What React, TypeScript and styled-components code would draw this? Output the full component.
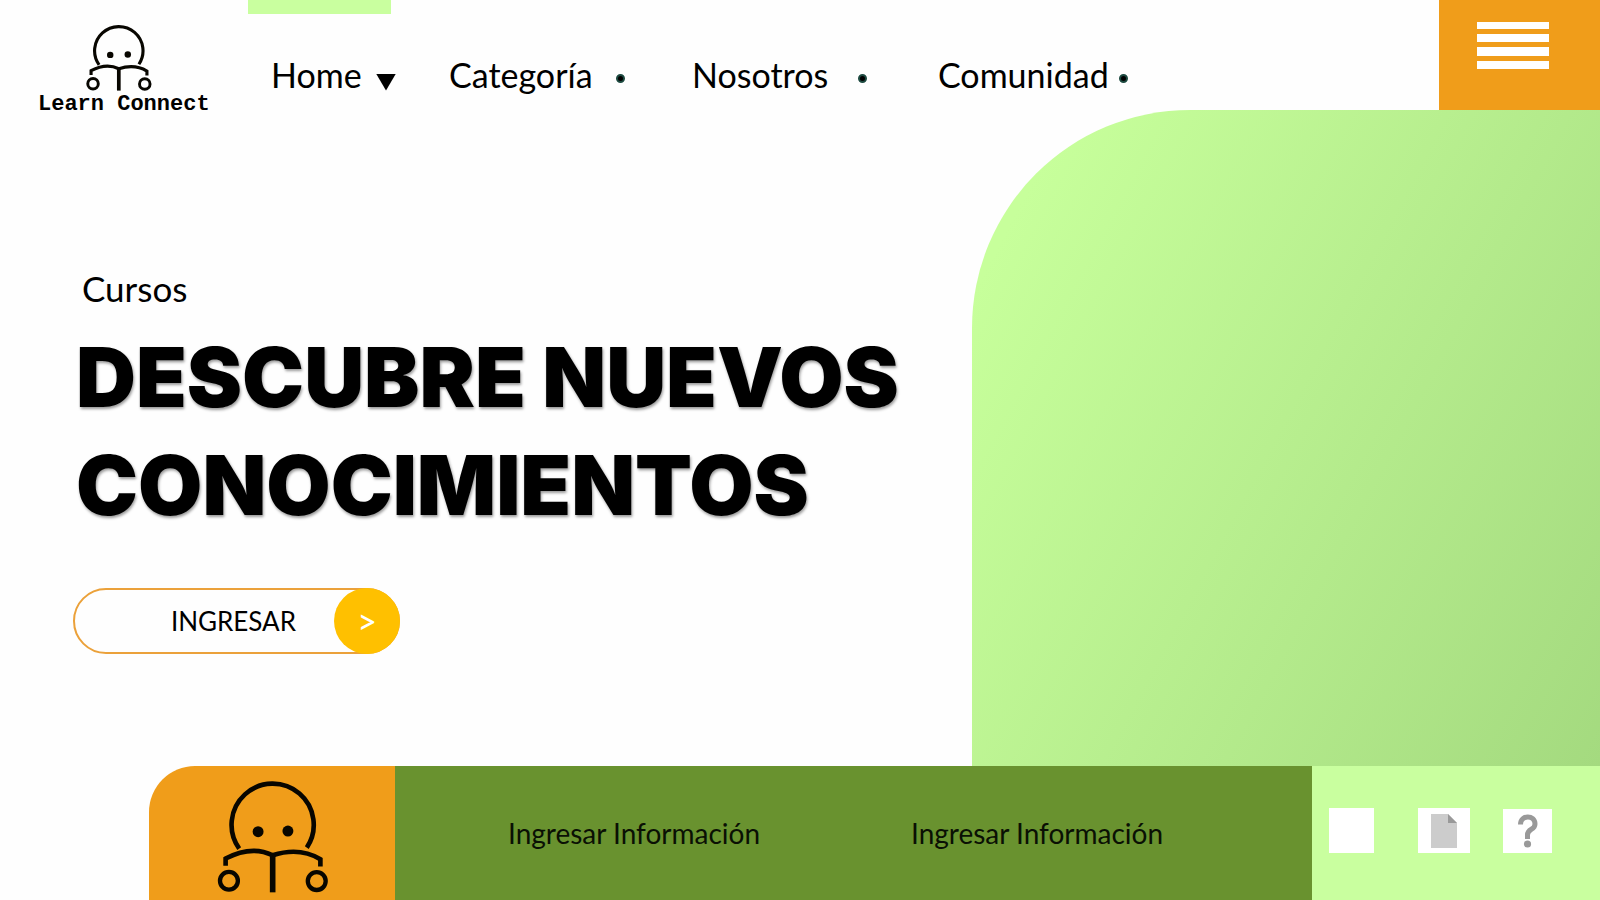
import React from "react";
import styled, { createGlobalStyle } from "styled-components";

const GlobalStyle = createGlobalStyle`
  * { box-sizing: border-box; }
  body { margin: 0; background: #fefefe; color: #000; font-family: Lato, "Open Sans", sans-serif; }
  button { padding: 0; border: 0; font: inherit; color: inherit; cursor: pointer; }
  a { color: inherit; text-decoration: none; }
  svg { display: block; flex: none; }
`;

const Page = styled.div`
  display: flex;
  flex-direction: column;
  min-height: 100vh;
`;

const Header = styled.header`
  display: flex;
  height: 110px;
`;

const Brand = styled.a`
  width: 248px;
  padding: 25px 0 0 38px;
`;

const BrandMark = styled.div`
  width: 66px;
  margin-left: 48px;
`;

const BrandName = styled.div`
  margin-top: 6px;
  font: 700 22px/16px "Courier New", "Liberation Mono", monospace;
  white-space: nowrap;
`;

const Nav = styled.nav`
  flex: 1;
  display: grid;
  grid-template-columns: 178px 243px 246px auto;
  justify-content: start;
`;

const NavItem = styled.a<{ $active?: boolean }>`
  &::before {
    content: "";
    display: block;
    width: 143px;
    height: 14px;
    margin-bottom: 41px;
    background: ${(p) => (p.$active ? "#c9ff9f" : "transparent")};
  }
`;

const NavLabel = styled.span`
  display: flex;
  align-items: center;
  padding-left: 23px;
  font-size: 34px;
  line-height: 40px;
`;

const NavText = styled.span<{ $width: number }>`
  width: ${(p) => p.$width}px;
`;

const Caret = styled.span`
  width: 20px;
  height: 17px;
  margin-top: 14px;
  background: #000;
  clip-path: polygon(0 0, 100% 0, 50% 100%);
`;

const Dot = styled.span`
  width: 9px;
  height: 9px;
  margin-top: 6px;
  border: 2px solid #1d4a40;
  border-radius: 50%;
  background: #000;
`;

const MenuButton = styled.button`
  display: flex;
  width: 161px;
  padding: 21px 0 0 38px;
  background: #f09d1a;
`;

const Main = styled.main`
  flex: 1;
  display: grid;
  grid-template-columns: 972fr 628fr;
`;

const Intro = styled.section`
  padding: 156px 0 56px 73px;
`;

const Kicker = styled.p`
  margin: 0 0 13px 9px;
  font-size: 35px;
  line-height: 44px;
`;

const Title = styled.h1`
  margin: 0 0 49px 3px;
  font: 900 83px/108px Inter, sans-serif;
  text-shadow: 1px 2px 3px rgba(0, 0, 0, 0.4);
`;

const EnterButton = styled.button`
  display: flex;
  align-items: center;
  justify-content: flex-end;
  width: 327px;
  height: 66px;
  border: 2px solid #eba13a;
  border-radius: 33px;
  background: transparent;
`;

const EnterText = styled.span`
  margin-right: 38px;
  font-size: 26px;
  line-height: 32px;
`;

const EnterArrow = styled.span`
  display: grid;
  place-items: center;
  width: 66px;
  height: 66px;
  margin-right: -2px;
  border-radius: 50%;
  background: #ffc000;
  color: #fff;
  font-size: 34px;
  line-height: 40px;
`;

const Panel = styled.div`
  border-top-left-radius: 218px;
  background: linear-gradient(118deg, #c7ff9b 10%, #a4da7f 100%);
`;

const Footer = styled.footer`
  display: flex;
  height: 134px;
  padding-left: 149px;
`;

const FooterBrand = styled.a`
  width: 246px;
  padding: 15px 0 0 68px;
  border-top-left-radius: 46px;
  background: #f09d1a;
`;

const FooterLinks = styled.div`
  flex: 1;
  display: flex;
  align-items: center;
  gap: 151px;
  padding-left: 113px;
  background: #69922f;
`;

const FooterLink = styled.a`
  color: #0a1004;
  font-size: 28px;
  line-height: 34px;
  white-space: nowrap;
`;

const Tools = styled.div`
  display: grid;
  grid-template-columns: 89px 85px 49px;
  align-items: end;
  width: 288px;
  padding: 0 0 47px 17px;
  background: #c9ff9f;
`;

const Tool = styled.button<{ $w: number; $h: number }>`
  display: grid;
  place-items: center;
  width: ${(p) => p.$w}px;
  height: ${(p) => p.$h}px;
  background: #fff;
`;

function Reader({ size, bold = 0 }: { size: number; bold?: number }) {
  return (
    <svg width={size} height={size} viewBox="263 92 334 338" fill="none" stroke="#080600" aria-hidden="true">
      <path d="M328 296A124 124 0 1 1 532 293" strokeWidth={14 + bold} />
      <circle cx="385" cy="245" r="16.5" fill="#080600" stroke="none" />
      <circle cx="475" cy="243" r="16.5" fill="#080600" stroke="none" />
      <path d="M287 348V326Q365 285 429 316Q510 290 573 328V350" strokeWidth={14 + bold} />
      <path d="M429 314V428" strokeWidth={17 + bold} />
      <circle cx="297" cy="393" r="27" strokeWidth={13 + bold} />
      <circle cx="562" cy="394" r="27" strokeWidth={13 + bold} />
    </svg>
  );
}

const links = [
  { text: "Home", width: 105, active: true },
  { text: "Categoría", width: 167 },
  { text: "Nosotros", width: 166 },
  { text: "Comunidad", width: 181 },
];

export default function App() {
  return (
    <Page>
      <GlobalStyle />
      <Header>
        <Brand href="#inicio">
          <BrandMark>
            <Reader size={66} bold={2} />
          </BrandMark>
          <BrandName>Learn Connect</BrandName>
        </Brand>
        <Nav>
          {links.map((l) => (
            <NavItem key={l.text} href="#" $active={l.active}>
              <NavLabel>
                <NavText $width={l.width}>{l.text}</NavText>
                {l.active ? <Caret /> : <Dot />}
              </NavLabel>
            </NavItem>
          ))}
        </Nav>
        <MenuButton aria-label="Menú">
          <svg width="72" height="48" fill="#fff" aria-hidden="true">
            <path d="M0 1h72v7H0zM0 13h72v8H0zM0 26h72v9H0zM0 40h72v8H0z" />
          </svg>
        </MenuButton>
      </Header>
      <Main>
        <Intro>
          <Kicker>Cursos</Kicker>
          <Title>DESCUBRE NUEVOS CONOCIMIENTOS</Title>
          <EnterButton>
            <EnterText>INGRESAR</EnterText>
            <EnterArrow>&gt;</EnterArrow>
          </EnterButton>
        </Intro>
        <Panel />
      </Main>
      <Footer>
        <FooterBrand href="#inicio" aria-label="Learn Connect">
          <Reader size={112} />
        </FooterBrand>
        <FooterLinks>
          <FooterLink href="#">Ingresar Información</FooterLink>
          <FooterLink href="#">Ingresar Información</FooterLink>
        </FooterLinks>
        <Tools>
          <Tool $w={45} $h={45} aria-label="Vacío" />
          <Tool $w={52} $h={45} aria-label="Documento">
            <svg width="26" height="34" aria-hidden="true">
              <path d="M0 0H17L26 9V34H0z" fill="#ccc" />
              <path d="M17 0L26 9H17z" fill="#999" />
            </svg>
          </Tool>
          <Tool $w={49} $h={44} aria-label="Ayuda">
            <svg width="20" height="34" viewBox="0 0 20 34" fill="none" aria-hidden="true">
              <path d="M2.5 10.5C2.5 0.5 17 0.5 17 10C17 16.5 9.5 14 9.5 21V25" stroke="#999" strokeWidth="5" />
              <circle cx="9.5" cy="30" r="3.6" fill="#999" />
            </svg>
          </Tool>
        </Tools>
      </Footer>
    </Page>
  );
}
